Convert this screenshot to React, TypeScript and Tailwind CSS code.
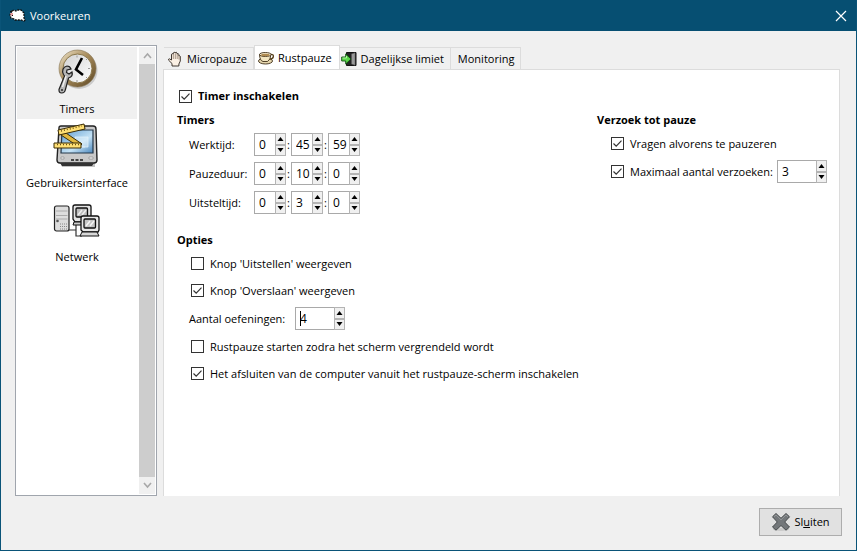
import React, { useState } from "react";

function SheepIcon() {
  return (
    <svg width="17" height="14" viewBox="0 0 17 14" aria-hidden="true">
      <path d="M3 2l2-1 2 1 2-1 3 0 2 2 1 1 0 5 1 2-1 1-3-1-6 0-1-1-3-1-1-3z" fill="#fff" stroke="#111" strokeWidth="1.300" strokeDasharray="2 1" />
      <path d="M1 4h3v3H2z" fill="#e8a0a0" />
      <path d="M1 2h2v1H1zM3 6h1v1H3z" fill="#111" />
    </svg>
  );
}

function ClockIcon() {
  return (
    <svg width="48" height="48" viewBox="0 0 48 48" aria-hidden="true">
      <defs>
        <linearGradient id="brass" x1="0" y1="0" x2="1" y2="1">
          <stop offset="0" stopColor="#f3e9cf" />
          <stop offset="0.45" stopColor="#a88c5c" />
          <stop offset="1" stopColor="#5b4522" />
        </linearGradient>
        <linearGradient id="dial" x1="0" y1="0" x2="1" y2="1">
          <stop offset="0" stopColor="#d2d2d2" />
          <stop offset="1" stopColor="#ffffff" />
        </linearGradient>
      </defs>
      <circle cx="26" cy="21.500" r="18.500" fill="#777" opacity="0.3" />
      <circle cx="24.500" cy="19.500" r="18.500" fill="url(#brass)" stroke="#83714f" strokeWidth="0.600" />
      <circle cx="24.500" cy="19.500" r="14.500" fill="url(#dial)" stroke="#8a7648" strokeWidth="1" />
      <path d="M29 9l-6 11.500 7 5.500" fill="none" stroke="#000" strokeWidth="2.600" />
      <path d="M24 6.500v2M24 31v2M35 19.500h2M34 10l-1 1M34 29l-1-1" stroke="#999" />
      <path
        d="M14 17c-4 1-5.500 5-3.500 8.500l1 1.500L6 40.500q-.3 3.500 2.700 3.500t3.600-3L15.500 29c3-1 4.500-3 3.500-6l-3 2-2.500-1.500.5-2.500 4-1q-1-3-4-3z"
        fill="#b5b5b5" stroke="#222" strokeWidth="1.200"
      />
      <path d="M13 27L9.500 38" stroke="#f2f2f2" strokeWidth="1.400" />
      <circle cx="9" cy="41" r="1.100" fill="#333" />
    </svg>
  );
}

function MonitorIcon() {
  return (
    <svg width="48" height="48" viewBox="0 0 48 48" aria-hidden="true">
      <defs>
        <linearGradient id="screen" x1="0" y1="0" x2="1" y2="1">
          <stop offset="0" stopColor="#5d9bd0" />
          <stop offset="0.6" stopColor="#c4e2f5" />
          <stop offset="1" stopColor="#4b87bd" />
        </linearGradient>
      </defs>
      <path d="M8 40h34v4H9z" fill="#999" opacity="0.6" />
      <path d="M6 5q0-2 2-2h32q3 0 3 3l1 31q0 3-3 3H7q-3 0-3-3z" fill="#c9c9c9" stroke="#222" strokeWidth="1.400" />
      <path d="M7 40h34l-2 3H9z" fill="#333" />
      <path d="M9 7h31v23H8z" fill="url(#screen)" stroke="#24384a" strokeWidth="1.200" />
      <path d="M22 14h13v10H22zM10 24h22" fill="#e5f3fb" fillOpacity="0.5" stroke="#e5f3fb" strokeWidth="0.700" />
      <path d="M18 37h13" stroke="#444" strokeWidth="2" strokeDasharray="3 1.500" />
      <path d="M8 34h3v2H8zM36 34h4v2h-4z" fill="#eee" stroke="#777" strokeWidth="0.500" />
      <g strokeLinejoin="round">
        <path d="M10 8l19 13-3 3L8 12z" fill="#e2b83e" stroke="#3c2d05" />
        <path d="M5 7l26-6 1 5L6 12z" fill="#ffe075" stroke="#3c2d05" />
        <path d="M1 20h27v5H1z" fill="#ffe075" stroke="#3c2d05" />
      </g>
      <path d="M8 8l21-5M4 21.500h22" stroke="#6f5310" strokeWidth="1.500" strokeDasharray="1 2" />
    </svg>
  );
}

function NetworkIcon() {
  return (
    <svg width="48" height="48" viewBox="0 0 48 48" aria-hidden="true">
      <path d="M16 33h7v6h6M23 33v-8" fill="none" stroke="#333" strokeWidth="1.200" />
      <rect x="1.500" y="9" width="14.500" height="25" rx="2" fill="#ddd" stroke="#222" strokeWidth="1.200" />
      <path d="M3 14h11.500M3 18.500h11.500M3 22h11.500" stroke="#aaa" />
      <circle cx="4.500" cy="24" r="1.300" fill="#555" />
      <path d="M7 27h7M7 29.500h7M7 32h7" stroke="#888" strokeDasharray="1 1" />
      <path d="M22 8h14q2 0 2 2v12l-1 3H22l-2-3V10q0-2 2-2z" fill="#e4e4e4" stroke="#111" strokeWidth="1.300" />
      <rect x="23" y="11" width="11.500" height="9" rx="1" fill="#bcbcbc" stroke="#111" strokeWidth="1.300" />
      <path d="M25 18l4-5M29 18l4-5" stroke="#eee" strokeWidth="1.500" />
      <path d="M21 25h10v3H20z" fill="#ccc" stroke="#111" />
      <path d="M30 19h14q2 0 2 2v12l-1 2H30l-2-2V21q0-2 2-2z" fill="#e8e8e8" stroke="#111" strokeWidth="1.300" />
      <rect x="31" y="22" width="11.500" height="9" rx="1" fill="#c4c4c4" stroke="#111" strokeWidth="1.300" />
      <path d="M33 29l4-5M37 29l4-5" stroke="#f5f5f5" strokeWidth="1.500" />
      <path d="M29 35h15l2 4H27z" fill="#d8d8d8" stroke="#111" />
    </svg>
  );
}

function HandIcon() {
  return (
    <svg width="16" height="16" viewBox="0 0 16 16" aria-hidden="true">
      <path
        d="M5 15v-2.500L1.700 9.300q-.7-1.300.6-1.500L4.500 9V3.300q.9-1.300 1.700 0V2q1-1.600 2 0v-.3q1-1.200 1.900.3V3q1-.9 1.800.4V5q.9-.7 1.400.4V10l-1.400 3v2z"
        fill="#fbf0e4" stroke="#2d241d" strokeWidth="0.900" strokeLinejoin="round"
      />
      <path d="M6.300 3.500V8M8.300 2.500V8M10.200 3v5M12 5v3.500" stroke="#84705d" strokeWidth="0.700" />
    </svg>
  );
}

function CupIcon() {
  return (
    <svg width="16" height="16" viewBox="0 0 16 16" aria-hidden="true">
      <ellipse cx="7.500" cy="11" rx="7" ry="3" fill="#e6d6ae" stroke="#3e2f17" strokeWidth="0.900" />
      <path d="M12.500 4.500c4-1 4 4.500-.7 4.700" fill="none" stroke="#5b4520" strokeWidth="1.300" />
      <path d="M1.500 4.500q.2 6 3.500 7h4.500q3-1.500 3.500-7z" fill="#f3e6c2" stroke="#3e2f17" strokeWidth="0.900" />
      <ellipse cx="7.300" cy="4.500" rx="5.800" ry="2" fill="#f8eed2" stroke="#3e2f17" strokeWidth="0.900" />
      <ellipse cx="7.300" cy="5" rx="4.300" ry="1.200" fill="#b08b52" />
    </svg>
  );
}

function DoorIcon() {
  return (
    <svg width="16" height="16" viewBox="0 0 16 16" aria-hidden="true">
      <path d="M5.500 1.500h9.500v13H5.500z" fill="#222" stroke="#111" />
      <path d="M10.500 3l3.500-1.300v12.600L10.500 13z" fill="#999" stroke="#555" strokeWidth="0.500" />
      <path d="M.7 6h4V3l5.300 5-5.300 5v-3h-4z" fill="#5bd64a" stroke="#0c4b0c" strokeWidth="0.900" />
      <path d="M1.500 7h4V5" fill="none" stroke="#c4ffb5" strokeWidth="0.800" />
    </svg>
  );
}

function CrossIcon() {
  return (
    <svg width="20" height="20" viewBox="0 0 20 20" aria-hidden="true">
      <ellipse cx="10" cy="17.500" rx="8" ry="1.500" fill="#bbb" opacity="0.6" />
      <path
        d="M5 1.500l5 4.800 5-4.800 3.500 3.300L13.700 10l4.800 5-3.500 3.200-5-4.700-5 4.700L1.500 15l4.800-5-4.800-5.200z"
        fill="#73777a" stroke="#44484a" strokeLinejoin="round"
      />
      <path d="M3 4.700L5 2.900l5 4.900 5-4.900 2 1.900" fill="none" stroke="#979a9c" />
    </svg>
  );
}

function Check({ label, checked = false, bold = false }: { label: string; checked?: boolean; bold?: boolean }) {
  const [on, setOn] = useState(checked);
  return (
    <label className={bold ? "flex h-6 items-center gap-[6px] font-bold" : "flex h-[21px] items-center gap-[6px]"}>
      <span className="grid size-[13px] shrink-0">
        <input
          type="checkbox"
          checked={on}
          onChange={() => setOn(!on)}
          className="col-start-1 row-start-1 size-[13px] appearance-none border border-[#333] bg-white"
        />
        {on && (
          <svg className="pointer-events-none col-start-1 row-start-1" width="13" height="13" viewBox="0 0 13 13" aria-hidden="true">
            <path d="M2.500 6.500l2.700 2.700 5.300-5.500" fill="none" stroke="#333" strokeWidth="1.200" />
          </svg>
        )}
      </span>
      <span className="whitespace-nowrap">{label}</span>
    </label>
  );
}

function Spin({ value, label, id, wide = false, caret = false }: { value: number; label: string; id?: string; wide?: boolean; caret?: boolean }) {
  const [v, setV] = useState(value);
  const step = "flex flex-1 items-center justify-center border border-[#b4b4b4] bg-[#f0f0f0]";
  return (
    <span className={wide ? "flex h-[23px] w-[50px]" : "flex h-[23px] w-8"}>
      <span className="flex min-w-0 flex-1 items-center border border-r-0 border-[#a9a9a9] bg-white pl-1">
        {caret && <span className="-mr-px h-[15px] w-px shrink-0 bg-black" />}
        <input
          id={id}
          aria-label={label}
          inputMode="numeric"
          value={v}
          onChange={(e) => setV(Number(e.target.value) || 0)}
          className="w-full min-w-0 bg-transparent text-[12px] outline-none"
        />
      </span>
      <span className="flex w-[11px] shrink-0 flex-col">
        <button type="button" aria-label={label + " omhoog"} onClick={() => setV(v + 1)} className={step}>
          <svg width="7" height="4" viewBox="0 0 7 4"><path d="M0.500 4l3-4 3 4z" /></svg>
        </button>
        <button type="button" aria-label={label + " omlaag"} onClick={() => setV(Math.max(0, v - 1))} className={step}>
          <svg width="7" height="4" viewBox="0 0 7 4"><path d="M0.500 0l3 4 3-4z" /></svg>
        </button>
      </span>
    </span>
  );
}

function TimeRow({ label, values }: { label: string; values: number[] }) {
  const units = ["uren", "minuten", "seconden"];
  return (
    <div role="group" aria-label={label} className="flex h-[23px] items-center pl-3">
      <span className="w-[65px]">{label}</span>
      {values.map((v, i) => (
        <React.Fragment key={i}>
          {i > 0 && <span className="w-[5px] text-center">:</span>}
          <Spin value={v} label={label + " " + units[i]} />
        </React.Fragment>
      ))}
    </div>
  );
}

const pages = [
  { name: "Timers", icon: <ClockIcon /> },
  { name: "Gebruikersinterface", icon: <MonitorIcon /> },
  { name: "Netwerk", icon: <NetworkIcon /> },
];

const tabs = [
  { name: "Micropauze", icon: <HandIcon />, pad: "pl-[3px]" },
  { name: "Rustpauze", icon: <CupIcon />, pad: "pl-[3px]" },
  { name: "Dagelijkse limiet", icon: <DoorIcon />, pad: "pl-px" },
  { name: "Monitoring", icon: null, pad: "pl-[7px]" },
];

export default function App() {
  return (
    <div className="flex min-h-screen flex-col border border-t-0 border-[#0a5478] bg-[#f0f0f0] font-['Open_Sans','Noto_Sans',sans-serif] text-[11px] leading-4 text-black">
      <header className="flex h-[31px] items-center bg-[#064f72] pr-[9px] pl-2 text-white">
        <SheepIcon />
        <h1 className="ml-1 flex-1">Voorkeuren</h1>
        <button type="button" aria-label="Venster sluiten">
          <svg width="12" height="12" viewBox="0 0 12 12"><path d="M1 1l10 10M11 1L1 11" stroke="#fff" strokeWidth="1.200" /></svg>
        </button>
      </header>

      <main className="flex flex-1 gap-[6px] pt-[14px] pr-4 pl-[14px]">
        <nav className="flex w-[142px] shrink-0 border border-[#a0a5ad] bg-white p-px">
          <div className="flex flex-1 flex-col gap-[2px]">
            {pages.map((p, i) => (
              <button
                key={p.name}
                type="button"
                className={i === 0 ? "flex h-[72px] flex-col items-center gap-[4px] bg-[#f0f0f0] pt-[2px]" : "flex h-[72px] flex-col items-center gap-[4px] pt-[2px]"}
              >
                {p.icon}
                <span className="whitespace-nowrap">{p.name}</span>
              </button>
            ))}
          </div>
          <div className="ml-[2px] flex w-4 flex-col items-center bg-[#f0f0f0]" aria-hidden="true">
            <svg width="9" height="17" viewBox="0 0 9 17"><path d="M1 11l3.500-4L8 11" fill="none" stroke="#a8a8a8" strokeWidth="1.600" /></svg>
            <div className="w-full flex-1 bg-[#cdcdcd]" />
            <svg width="9" height="17" viewBox="0 0 9 17"><path d="M1 6l3.500 4L8 6" fill="none" stroke="#a8a8a8" strokeWidth="1.600" /></svg>
          </div>
        </nav>

        <section className="flex min-w-0 flex-1 flex-col">
          <div role="tablist" className="flex h-6 items-end pl-px">
            {tabs.map((t, i) => (
              <button
                key={t.name}
                type="button"
                role="tab"
                aria-selected={i === 1}
                className={
                  (i === 1
                    ? "-mb-px flex h-[25px] items-center gap-1 border border-b-0 border-[#dcdcdc] bg-white pr-[7px] whitespace-nowrap "
                    : "flex h-[22px] items-center gap-1 border-t border-r border-[#dcdcdc] pr-[6px] whitespace-nowrap ") + t.pad
                }
              >
                {t.icon}
                {t.name}
              </button>
            ))}
          </div>

          <div role="tabpanel" className="flex-1 border border-b-0 border-[#dcdcdc] bg-white pt-[14px] pr-3 pl-[13px]">
            <div className="pl-[2px]">
              <Check label="Timer inschakelen" checked bold />
            </div>
            <div className="flex justify-between">
              <div>
                <h2 className="h-[25px] leading-6 font-bold">Timers</h2>
                <div className="flex flex-col gap-[6px]">
                  <TimeRow label="Werktijd:" values={[0, 45, 59]} />
                  <TimeRow label="Pauzeduur:" values={[0, 10, 0]} />
                  <TimeRow label="Uitsteltijd:" values={[0, 3, 0]} />
                </div>
                <h2 className="mt-[14px] h-[25px] leading-6 font-bold">Opties</h2>
                <div className="flex flex-col gap-[6px] pl-[14px]">
                  <Check label="Knop 'Uitstellen' weergeven" />
                  <Check label="Knop 'Overslaan' weergeven" checked />
                  <div className="-ml-[2px] flex items-center">
                    <label htmlFor="oefeningen" className="w-[106px]">Aantal oefeningen:</label>
                    <Spin id="oefeningen" label="Aantal oefeningen" value={4} wide caret />
                  </div>
                  <Check label="Rustpauze starten zodra het scherm vergrendeld wordt" />
                  <Check label="Het afsluiten van de computer vanuit het rustpauze-scherm inschakelen" checked />
                </div>
              </div>
              <div className="w-[230px] shrink-0">
                <h2 className="h-[25px] leading-6 font-bold">Verzoek tot pauze</h2>
                <div className="flex flex-col gap-[6px] pl-[14px]">
                  <Check label="Vragen alvorens te pauzeren" checked />
                  <div className="flex items-center justify-between">
                    <Check label="Maximaal aantal verzoeken:" checked />
                    <Spin label="Maximaal aantal verzoeken" value={3} wide />
                  </div>
                </div>
              </div>
            </div>
          </div>
        </section>
      </main>

      <footer className="flex justify-end pt-3 pr-[14px] pb-[14px]">
        <button type="button" className="flex h-7 w-[83px] items-center justify-center gap-[3px] border border-[#adadad] bg-[#e1e1e1]">
          <CrossIcon />
          <span>Sl<u>u</u>iten</span>
        </button>
      </footer>
    </div>
  );
}
